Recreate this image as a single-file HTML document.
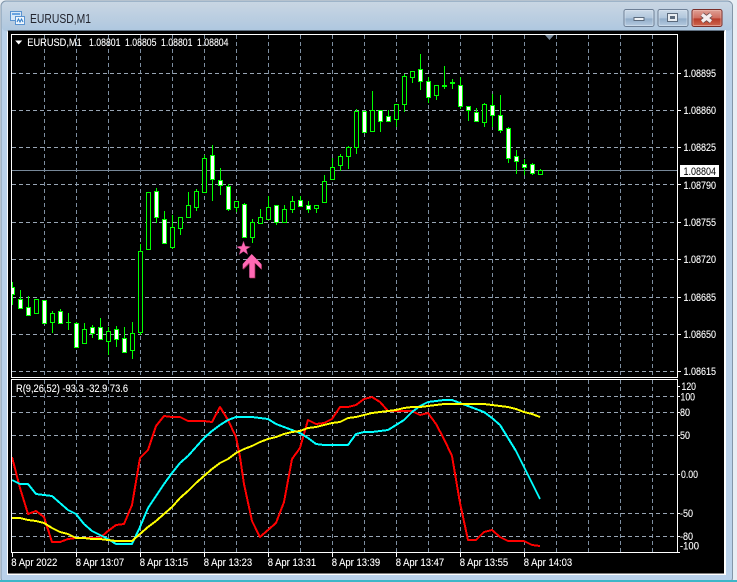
<!DOCTYPE html>
<html><head><meta charset="utf-8"><title>EURUSD,M1</title>
<style>html,body{margin:0;padding:0;background:#e8eef4;width:737px;height:582px;overflow:hidden}svg{display:block}text{font-family:"Liberation Sans",sans-serif;font-size:11px;fill:#fff;stroke:#fff;stroke-width:.12}</style></head>
<body>
<svg width="737" height="582" viewBox="0 0 737 582" xmlns="http://www.w3.org/2000/svg">
<defs>
<linearGradient id="tb" x1="0" y1="0" x2="0" y2="1"><stop offset="0" stop-color="#c9d6e3"/><stop offset="1" stop-color="#aec7df"/></linearGradient>
<linearGradient id="bn" x1="0" y1="0" x2="0" y2="1"><stop offset="0" stop-color="#cddbe9"/><stop offset=".5" stop-color="#b0c6dc"/><stop offset=".55" stop-color="#92adc9"/><stop offset="1" stop-color="#b8cde2"/></linearGradient>
<linearGradient id="bc" x1="0" y1="0" x2="0" y2="1"><stop offset="0" stop-color="#e0a398"/><stop offset=".5" stop-color="#cf6f60"/><stop offset=".55" stop-color="#b83c2a"/><stop offset="1" stop-color="#cf6a52"/></linearGradient>
<clipPath id="cm"><rect x="12" y="35" width="665" height="342"/></clipPath>
</defs>
<rect x="0" y="0" width="737" height="582" fill="#e8eef4"/>
<rect x="1" y="1" width="731.5" height="582" rx="5" fill="#b9d1ea" stroke="#8496a8"/>
<rect x="2" y="2" width="730" height="29" rx="4" fill="url(#tb)"/>
<rect x="0" y="580" width="737" height="2" fill="#3cb6c8"/>
<rect x="7" y="30" width="719" height="545" fill="#fff"/>
<rect x="7.5" y="30" width="717" height="1.5" fill="#5f6f80"/>
<rect x="8" y="31" width="716" height="542.5" fill="#000"/>

<!-- title -->
<g shape-rendering="crispEdges">
<rect x="10.5" y="11.5" width="11" height="9" fill="#d8e8f8" stroke="#5a93d0"/>
<rect x="12" y="13" width="8" height="2" fill="#6aa4e0"/>
<rect x="15.5" y="16.5" width="9" height="8" fill="#eef5fc" stroke="#5a93d0"/>
</g>
<path d="M17 22l1.5-3 1.5 3 1.500-3 1.500 3" fill="none" stroke="#2f7cc8" stroke-width="1"/>
<text x="30" y="23" textLength="61" lengthAdjust="spacingAndGlyphs" style="font-size:13px;fill:#22242e;stroke:none">EURUSD,M1</text>

<!-- buttons -->
<rect x="624" y="9.500" width="30" height="17" rx="2" fill="url(#bn)" stroke="#6d7f95"/>
<rect x="625" y="10.500" width="28" height="15" rx="1" fill="none" stroke="#dbe6f1" stroke-opacity=".6"/>
<rect x="634" y="17.500" width="10" height="3" fill="#eef2f6" stroke="#5b6a7c"/>
<rect x="658" y="9.500" width="30" height="17" rx="2" fill="url(#bn)" stroke="#6d7f95"/>
<rect x="659" y="10.500" width="28" height="15" rx="1" fill="none" stroke="#dbe6f1" stroke-opacity=".6"/>
<rect x="667.500" y="13.500" width="10" height="8" fill="#e8edf2" stroke="#5b6a7c"/>
<rect x="670" y="16" width="5" height="3" fill="#5b6a7c"/>
<rect x="692" y="9.500" width="30" height="17" rx="2" fill="url(#bc)" stroke="#7a2f2a"/>
<rect x="693" y="10.500" width="28" height="15" rx="1" fill="none" stroke="#eebcb2" stroke-opacity=".6"/>
<path d="M702 14.500l9 7M711 14.500l-9 7" stroke="#6a4a4a" stroke-width="5" fill="none"/>
<path d="M702 14.500l9 7M711 14.500l-9 7" stroke="#f4eeee" stroke-width="3.400" fill="none"/>

<!-- grid -->
<g shape-rendering="crispEdges" stroke="#7d8ea0" stroke-width="1" stroke-dasharray="4 3" fill="none">
<path d="M44.500 35V377M76.500 35V377M108.500 35V377M140.500 35V377M172.500 35V377M204.500 35V377M236.500 35V377M268.500 35V377M300.500 35V377M332.500 35V377M364.500 35V377M396.500 35V377M428.500 35V377M460.500 35V377M492.500 35V377M524.500 35V377M556.500 35V377M588.500 35V377M620.500 35V377M652.500 35V377"/>
<path d="M44.500 380V552M76.500 380V552M108.500 380V552M140.500 380V552M172.500 380V552M204.500 380V552M236.500 380V552M268.500 380V552M300.500 380V552M332.500 380V552M364.500 380V552M396.500 380V552M428.500 380V552M460.500 380V552M492.500 380V552M524.500 380V552M556.500 380V552M588.500 380V552M620.500 380V552M652.500 380V552"/>
<g stroke="#98a5b4">
<path d="M12 73.500H677M12 110.500H677M12 147.500H677M12 184.500H677M12 222.500H677M12 259.500H677M12 297.500H677M12 334.500H677M12 371.500H677"/>
<path d="M12 396.500H677M12 412.500H677M12 435.500H677M12 474.500H677M12 513.500H677M12 536.500H677"/>
</g>
</g>
<rect x="12" y="170" width="665" height="1" fill="#778899"/>

<!-- candles -->
<g clip-path="url(#cm)" shape-rendering="crispEdges" stroke="#00ff00" stroke-width="1" fill="none">
<path d="M12.500 282V305M20.500 290V308M28.500 296V315M44.500 300V324M52.500 311V333M60.500 309V324M68.500 313V330M76.500 322V348M84.500 323V343M92.500 325V338M100.500 318V340M108.500 327V355M116.500 326V347M124.500 327V353M132.500 322V359M140.500 244V335M156.500 188V223M164.500 211V244M172.500 215V249M180.500 217V235M188.500 192V217M196.500 189V211M204.500 155V193M212.500 145V201M220.500 168V195M228.500 184V211M236.500 201V212M244.500 203V237M252.500 219V243M260.500 209V223M268.500 196V219M276.500 205V225M284.500 205V222M292.500 196V213M300.500 196V206M308.500 201V213M316.500 205V213M324.500 175V202M332.500 158V179M340.500 154V171M348.500 146V169M356.500 109V154M364.500 111V133M372.500 91V131M380.500 110V132M388.500 110V121M396.500 104V127M404.500 74V112M412.500 71V83M420.500 54V90M428.500 77V103M436.500 85V100M444.500 66V89M452.500 79V89M460.500 77V109M468.500 106V121M476.500 108V121M484.500 103V127M492.500 94V127M500.500 95V133M508.500 127V163M516.500 150V174M524.500 159V175M532.500 163V175M540.500 169V174"/>
<path fill="#fff" d="M10.500 287.500h4v7h-4zM18.500 299.500h4v9h-4zM26.500 307.500h4v8h-4zM42.500 300.500h4v23h-4zM58.500 311.500h4v12h-4zM74.500 323.500h4v24h-4zM90.500 327.500h4v6h-4zM98.500 327.500h4v12h-4zM114.500 329.500h4v10h-4zM122.500 338.500h4v14h-4zM154.500 191.500h4v26h-4zM162.500 219.500h4v24h-4zM210.500 155.500h4v24h-4zM218.500 180.500h4v5h-4zM226.500 186.500h4v23h-4zM242.500 204.500h4v33h-4zM274.500 205.500h4v17h-4zM298.500 200.500h4v6h-4zM306.500 205.500h4v4h-4zM362.500 111.500h4v21h-4zM378.500 110.500h4v11h-4zM386.500 116.500h4v5h-4zM418.500 69.500h4v12h-4zM426.500 81.500h4v16h-4zM458.500 85.500h4v21h-4zM466.500 106.500h4v4h-4zM474.500 112.500h4v9h-4zM490.500 105.500h4v10h-4zM498.500 115.500h4v15h-4zM506.500 128.500h4v30h-4zM514.500 156.500h4v5h-4zM522.500 164.500h4v3h-4zM530.500 164.500h4v9h-4z"/>
<path fill="#000" d="M34.500 299.500h4v14h-4zM50.500 313.500h4v9h-4zM82.500 329.500h4v14h-4zM106.500 331.500h4v10h-4zM130.500 333.500h4v17h-4zM138.500 251.500h4v81h-4zM146.500 192.500h4v57h-4zM170.500 227.500h4v20h-4zM178.500 217.500h4v11h-4zM186.500 205.500h4v12h-4zM194.500 191.500h4v16h-4zM202.500 158.500h4v34h-4zM234.500 201.500h4v6h-4zM250.500 222.500h4v15h-4zM258.500 217.500h4v6h-4zM266.500 207.500h4v12h-4zM282.500 209.500h4v13h-4zM290.500 201.500h4v8h-4zM314.500 205.500h4v3h-4zM322.500 181.500h4v21h-4zM330.500 167.500h4v12h-4zM338.500 156.500h4v9h-4zM346.500 147.500h4v9h-4zM354.500 111.500h4v36h-4zM370.500 110.500h4v21h-4zM394.500 104.500h4v15h-4zM402.500 76.500h4v28h-4zM410.500 71.500h4v6h-4zM434.500 85.500h4v10h-4zM482.500 104.500h4v18h-4zM538.500 170.500h4v4h-4z"/>
<path fill="#00ff00" stroke="none" d="M66 322h5v1h-5zM442 85h5v2h-5zM450 82h5v2h-5z"/>
</g>

<!-- star + arrow -->
<polygon points="243.500,241 245.300,246.100 250.600,246.700 246.400,249.400 247.900,254.600 243.500,251.500 239.100,254.600 240.600,249.400 236.400,246.700 241.700,246.100" fill="#ff69b4" stroke="#7a2550" stroke-width=".5"/>
<polygon points="252.400,254.700 262,264.700 262,270 255.400,263.400 255.400,278.400 250,278.400 250,263.400 243.400,270 243.400,264.700" fill="#8a1f45"/>
<polygon points="251.700,254 261.300,264 261.300,269.300 254.700,262.700 254.700,277.700 249.300,277.700 249.300,262.700 242.700,269.300 242.700,264" fill="#ff69b4"/>

<!-- indicator lines -->
<g fill="none" stroke-width="2" shape-rendering="crispEdges" stroke-linejoin="round">
<polyline stroke="#ff0000" points="12,457 20,488 28,514 36,511 44,517 52,542 60,542 68,539 76,538 84,538 92,538 100,538 108,531 116,525 124,524 132,505 140,458 148,450 156,426 164,416 172,417 180,417 188,421 196,421 204,421 212,422 220,407 228,420 236,437 240,457 244,484 252,521 260,537 268,530 276,523 284,502 292,459 300,448 308,420 316,424 324,423 332,419 340,407 348,407 356,405 364,399 372,397 380,402 388,411 396,411 404,411 412,411 420,415 428,413 436,424 444,439 452,456 460,503 468,540 476,540 484,532 492,530 500,537 508,541 516,541 524,541 532,545 540,546"/>
<polyline stroke="#00ffff" points="12,480 20,484 28,484 36,494 44,495 52,496 60,503 68,510 76,514 84,524 92,531 100,535 108,539 116,544 124,544 132,544 140,527 148,508 156,496 164,484 172,473 180,463 188,456 196,447 204,438 212,431 220,425 228,420 236,417 244,417 252,417 260,418 268,419 276,424 284,427 292,430 300,433 308,438 316,444 324,445 332,445 340,445 348,445 356,434 364,432 372,432 380,431 388,430 396,425 404,420 412,412 420,406 428,402 436,401 444,400 452,400 460,403 468,406 476,409 484,412 492,418 500,425 508,438 516,451 524,467 532,483 540,499"/>
<polyline stroke="#ffff00" points="12,518 20,518 28,520 36,521 44,523 52,528 60,532 68,534 76,538 84,538 92,539 100,539 108,540 116,541 124,541 132,541 140,534 148,527 156,521 164,514 172,507 180,498 188,491 196,483 204,476 212,469 220,463 228,459 236,453 244,449 252,446 260,442 268,439 276,437 284,434 292,432 300,431 308,428 316,427 324,425 332,423 340,422 348,418 356,417 364,415 372,413 380,412 388,411 396,410 404,408 412,407 420,407 428,406 436,405 444,404 452,404 460,404 468,404 476,404 484,404 492,405 500,406 508,407 516,409 524,412 532,414 540,417"/>
</g>

<!-- frames -->
<g shape-rendering="crispEdges" fill="none" stroke="#fff" stroke-width="1">
<rect x="11.500" y="34.500" width="666" height="343"/>
<rect x="11.500" y="379.500" width="666" height="173"/>
<path d="M678 73.500h3M678 110.500h3M678 147.500h3M678 184.500h3M678 222.500h3M678 259.500h3M678 297.500h3M678 334.500h3M678 371.500h3"/>
<path d="M678 396.500h2M678 412.500h2M678 435.500h2M678 474.500h2M678 513.500h2M678 536.500h2M678 552.500h2M678 386.500h2"/>
<path d="M12.500 553v4M76.500 553v4M140.500 553v4M204.500 553v4M268.500 553v4M332.500 553v4M396.500 553v4M460.500 553v4M524.500 553v4"/>
</g>
<polygon points="545,35 554,35 549.500,40" fill="#778899"/>
<polygon points="15.200,40.500 22.200,40.500 18.700,44.500" fill="#fff"/>

<!-- header text -->
<text x="27.300" y="46" textLength="54.500" lengthAdjust="spacingAndGlyphs">EURUSD,M1</text>
<text x="89" y="46" textLength="31.500" lengthAdjust="spacingAndGlyphs">1.08801</text>
<text x="125" y="46" textLength="31.500" lengthAdjust="spacingAndGlyphs">1.08805</text>
<text x="161" y="46" textLength="31.500" lengthAdjust="spacingAndGlyphs">1.08801</text>
<text x="197" y="46" textLength="31.500" lengthAdjust="spacingAndGlyphs">1.08804</text>
<text x="16" y="392" textLength="112" lengthAdjust="spacingAndGlyphs">R(9,26,52) -93.3 -32.9 73.6</text>

<!-- price axis -->
<text x="683.500" y="77" textLength="32.500" lengthAdjust="spacingAndGlyphs">1.08895</text>
<text x="683.500" y="114" textLength="32.500" lengthAdjust="spacingAndGlyphs">1.08860</text>
<text x="683.500" y="151" textLength="32.500" lengthAdjust="spacingAndGlyphs">1.08825</text>
<text x="683.500" y="189" textLength="32.500" lengthAdjust="spacingAndGlyphs">1.08790</text>
<text x="683.500" y="226" textLength="32.500" lengthAdjust="spacingAndGlyphs">1.08755</text>
<text x="683.500" y="263" textLength="32.500" lengthAdjust="spacingAndGlyphs">1.08720</text>
<text x="683.500" y="301" textLength="32.500" lengthAdjust="spacingAndGlyphs">1.08685</text>
<text x="683.500" y="338" textLength="32.500" lengthAdjust="spacingAndGlyphs">1.08650</text>
<text x="683.500" y="375" textLength="32.500" lengthAdjust="spacingAndGlyphs">1.08615</text>
<rect x="680" y="165" width="39" height="12" fill="#fff"/>
<text x="683.500" y="175" textLength="32.500" lengthAdjust="spacingAndGlyphs" style="fill:#000;stroke:none">1.08804</text>

<!-- indicator axis -->
<text x="681.500" y="390" textLength="14.500" lengthAdjust="spacingAndGlyphs">120</text>
<text x="680.500" y="400.500" textLength="14.500" lengthAdjust="spacingAndGlyphs">100</text>
<text x="680" y="416" textLength="10" lengthAdjust="spacingAndGlyphs">80</text>
<text x="680" y="439" textLength="10" lengthAdjust="spacingAndGlyphs">50</text>
<text x="681" y="478" textLength="17" lengthAdjust="spacingAndGlyphs">0.00</text>
<text x="680" y="517" textLength="13" lengthAdjust="spacingAndGlyphs">-50</text>
<text x="680" y="540" textLength="13" lengthAdjust="spacingAndGlyphs">-80</text>
<text x="680" y="549.500" textLength="19" lengthAdjust="spacingAndGlyphs">-100</text>

<!-- time axis -->
<text x="11.300" y="566" textLength="46" lengthAdjust="spacingAndGlyphs">8 Apr 2022</text>
<text x="75.700" y="566" textLength="48.500" lengthAdjust="spacingAndGlyphs">8 Apr 13:07</text>
<text x="139.700" y="566" textLength="48.500" lengthAdjust="spacingAndGlyphs">8 Apr 13:15</text>
<text x="203.700" y="566" textLength="48.500" lengthAdjust="spacingAndGlyphs">8 Apr 13:23</text>
<text x="267.700" y="566" textLength="48.500" lengthAdjust="spacingAndGlyphs">8 Apr 13:31</text>
<text x="331.700" y="566" textLength="48.500" lengthAdjust="spacingAndGlyphs">8 Apr 13:39</text>
<text x="395.700" y="566" textLength="48.500" lengthAdjust="spacingAndGlyphs">8 Apr 13:47</text>
<text x="459.700" y="566" textLength="48.500" lengthAdjust="spacingAndGlyphs">8 Apr 13:55</text>
<text x="523.700" y="566" textLength="48.500" lengthAdjust="spacingAndGlyphs">8 Apr 14:03</text>
</svg>
</body></html>
